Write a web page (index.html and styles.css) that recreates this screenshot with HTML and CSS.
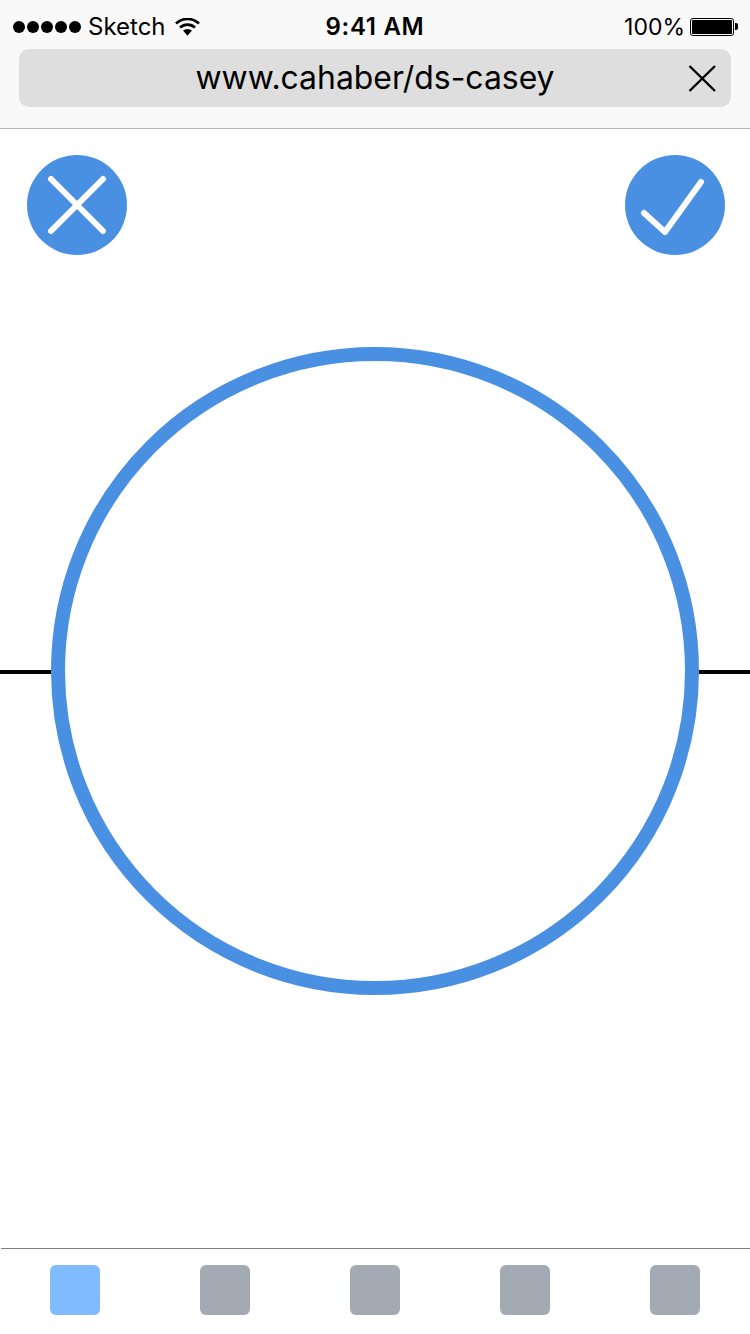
FILE: index.html
```html
<!DOCTYPE html>
<html lang="en">
<head>
  <meta charset="UTF-8" />
  <title>www.cahaber/ds-casey</title>
  <meta name="viewport" content="width=device-width, initial-scale=1.0" />
  <link rel="stylesheet" href="styles.css">
</head>
<body>

<header class="browser">
  <div class="status">
    <div class="status-left">
      <span class="signal"><i></i><i></i><i></i><i></i><i></i></span>
      <span class="carrier">Sketch</span>
      <svg class="wifi" width="25" height="18" viewBox="0 0 25 18">
        <path d="M12.5 17.8 L8 12.6 A7 7 0 0 1 17 12.6 Z" fill="#000"/>
        <path d="M5 9.6 A10.8 10.8 0 0 1 20 9.6" fill="none" stroke="#000" stroke-width="2.8"/>
        <path d="M1 5.6 A16.6 16.6 0 0 1 24 5.6" fill="none" stroke="#000" stroke-width="2.8"/>
      </svg>
    </div>
    <div class="time">9:41 AM</div>
    <div class="status-right">
      <span class="percent">100%</span>
      <span class="battery"><b></b></span>
      <span class="battery-tip"></span>
    </div>
  </div>
  <div class="address">
    <span class="url">www.cahaber/ds-casey</span>
    <svg class="clear" width="28" height="28" viewBox="0 0 28 28">
      <path d="M1.5 1 L27 26 M27 1 L1.5 26" stroke="#000" stroke-width="2.4" fill="none"/>
    </svg>
  </div>
</header>

<main class="page">
  <div class="actions">
    <button class="round-btn">
      <svg width="100" height="100" viewBox="0 0 100 100">
        <path d="M24 24 L76 76 M76 24 L24 76" stroke="#fff" stroke-width="6" stroke-linecap="round" fill="none"/>
      </svg>
    </button>
    <button class="round-btn">
      <svg width="100" height="100" viewBox="0 0 100 100">
        <path d="M19 58 L40 77 L76 27" stroke="#fff" stroke-width="6" stroke-linecap="round" stroke-linejoin="round" fill="none"/>
      </svg>
    </button>
  </div>

  <div class="stage">
    <div class="rule"></div>
    <div class="ring"></div>
    <div class="rule"></div>
  </div>
</main>

<footer class="tabs">
  <div class="tab active"></div>
  <div class="tab"></div>
  <div class="tab"></div>
  <div class="tab"></div>
  <div class="tab"></div>
</footer>

</body>
</html>
```

FILE: styles.css
```css
html, body {
  margin: 0;
  padding: 0;
  height: 100%;
  overflow: hidden;
  background: #fff;
  color: #000;
  font-family: Inter, 'Liberation Sans', sans-serif;
}

body {
  display: flex;
  flex-direction: column;
  height: 1334px;
}

.browser {
  background: #f9f9f9;
  border-bottom: 1px solid #b2b2b2;
  height: 128px;
}

.status {
  display: flex;
  align-items: center;
  justify-content: space-between;
  height: 49px;
  padding: 4px 12px 0 13px;
  box-sizing: border-box;
  font-size: 23px;
  position: relative;
}

.status-left, .status-right {
  display: flex;
  align-items: center;
}

.signal {
  display: flex;
  gap: 2px;
}

.signal i {
  width: 12px;
  height: 12px;
  border-radius: 50%;
  background: #000;
}

.carrier {
  margin-left: 7px;
  font-size: 24px;
}

.wifi {
  margin-left: 9px;
}

.time {
  position: absolute;
  left: 0;
  right: 0;
  text-align: center;
  font-size: 24px;
  font-weight: 600;
  letter-spacing: 0.7px;
}

.battery {
  margin-left: 5px;
  width: 44px;
  height: 18px;
  box-sizing: border-box;
  border: 1px solid #000;
  border-radius: 3px;
  padding: 1px;
  display: flex;
}

.battery b {
  flex: 1;
  background: #000;
  border-radius: 1px;
}

.battery-tip {
  width: 3px;
  height: 7px;
  margin-left: 1px;
  background: #000;
  border-radius: 0 2px 2px 0;
}

.address {
  margin: 0 19px;
  height: 58px;
  padding-bottom: 2px;
  box-sizing: border-box;
  background: #dedede;
  border-radius: 10px;
  display: flex;
  align-items: center;
  justify-content: center;
  position: relative;
}

.url {
  font-size: 31.9px;
}

.clear {
  position: absolute;
  right: 15px;
  top: 16px;
}

.page {
  flex: 1;
}

.actions {
  display: flex;
  justify-content: space-between;
  padding: 26px 25px 0 27px;
}

.round-btn {
  width: 100px;
  height: 100px;
  padding: 0;
  border: none;
  border-radius: 50%;
  background: #4a90e2;
  display: block;
}

.round-btn svg {
  display: block;
}

.stage {
  display: flex;
  align-items: center;
  margin-top: 92px;
}

.rule {
  flex: 1;
  height: 4px;
  margin-top: 2px;
  background: #000;
}

.ring {
  width: 648px;
  height: 648px;
  box-sizing: border-box;
  border: 14px solid #4a90e2;
  border-radius: 50%;
}

.tabs {
  display: flex;
  justify-content: space-between;
  margin-left: 1px;
  height: 86px;
  box-sizing: border-box;
  padding: 16px 50px 0 49px;
  border-top: 1px solid #7f7f7f;
}

.tab {
  width: 50px;
  height: 50px;
  border-radius: 6px;
  background: #a4aab3;
}

.tab.active {
  background: #80baff;
}
```
